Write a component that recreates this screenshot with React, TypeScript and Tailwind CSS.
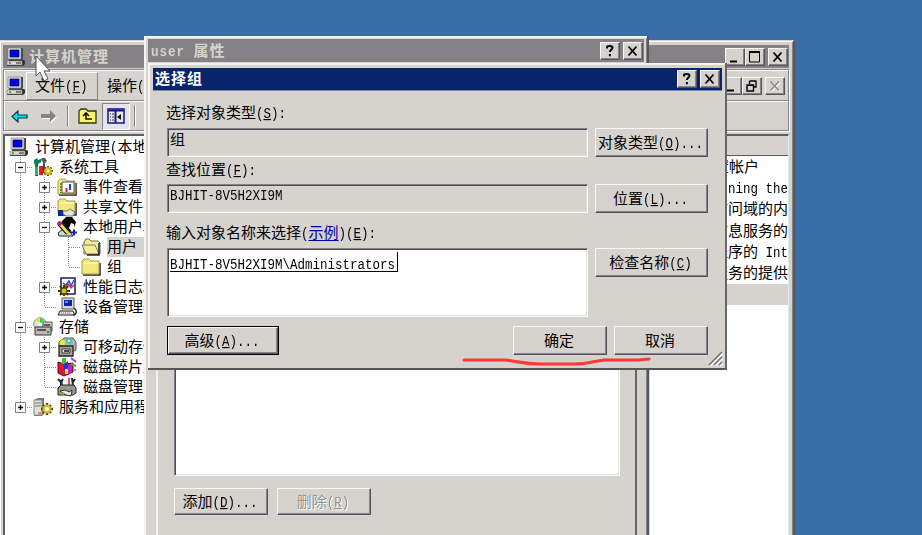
import React from "react";

const raised =
  "border border-t-[#f8f8f5] border-l-[#f8f8f5] border-r-[#55555a] border-b-[#55555a] shadow-[inset_-1px_-1px_0_#84828a]";
const sunken =
  "border border-t-[#84828a] border-l-[#84828a] border-r-[#fbfbf8] border-b-[#fbfbf8] shadow-[inset_1px_1px_0_#4b4b50,inset_-1px_-1px_0_#e3e1dc]";

/* Mixed text: full-width CJK glyphs with half-width Latin; "&" marks the mnemonic. */
function T({ s, className = "" }: { s: string; className?: string }) {
  const parts = s.match(/[\u3400-\u9fff]+|&.|[^\u3400-\u9fff&]+/g) ?? [];
  return (
    <span
      className={`block h-[20px] shrink-0 -translate-x-px -translate-y-px whitespace-pre text-[15px] leading-[20px] font-['Noto_Sans_CJK_SC',sans-serif] ${className}`}
    >
      {parts.map((p, i) =>
        /[\u3400-\u9fff]/.test(p) ? (
          <span key={i}>{p}</span>
        ) : (
          <span
            key={i}
            className={`inline-block origin-[0_80%] scale-y-[1.16] text-[12.5px] leading-none font-['Liberation_Mono',monospace] ${
              p[0] === "&" ? "underline underline-offset-1" : ""
            }`}
          >
            {p.replace("&", "")}
          </span>
        )
      )}
    </span>
  );
}

function Glyph({ kind }: { kind: string }) {
  return (
    <svg width="16" height="14" viewBox="0 0 16 14" fill="none" stroke="#000" strokeWidth="2">
      {kind === "min" && <path d="M3 11.5h7" />}
      {kind === "max" && (
        <>
          <path d="M2.5 2v10h10V2" strokeWidth="1" />
          <path d="M2 2h11" />
        </>
      )}
      {kind === "restore" && (
        <>
          <path d="M5.5 2h7M5.5 2v3M12 2v6h-2" strokeWidth="1.3" />
          <path d="M3 6h6.5v6H3zM3 6.3h6" strokeWidth="1.4" />
        </>
      )}
      {kind === "close" && <path d="M3.500 2.500l8 9M11.500 2.500l-8 9" strokeWidth="1.800" />}
      {kind === "closeOff" && (
        <>
          <path d="M4.5 3.5l8.5 9M13 3.5l-8.5 9" stroke="#fff" strokeWidth="1.5" />
          <path d="M3.5 2.5l8.5 9M12 2.5l-8.5 9" stroke="#8a888a" strokeWidth="1.5" />
        </>
      )}
      {kind === "help" && (
        <path d="M5 4.5V3.2C5 2.3 6 2 7.7 2s2.8.4 2.8 1.8c0 1.7-2.6 1.9-2.6 4.2M7.9 10v2.3" />
      )}
    </svg>
  );
}

function CapBtn({ kind, className = "" }: { kind: string; className?: string }) {
  return (
    <div
      className={`flex h-[18px] w-5 shrink-0 items-center justify-center bg-[#d6d3ce] ${raised} ${className}`}
    >
      <Glyph kind={kind} />
    </div>
  );
}

function Computer() {
  return (
    <svg width="20" height="20" viewBox="0 0 20 20">
      <path d="M3 2l2-1h12v11l-2 2H3z" fill="#444" />
      <path d="M2 1h13v11H2z" fill="#e5e3de" stroke="#777" strokeWidth=".7" />
      <path d="M4 3h9v7H4z" fill="#0000e8" stroke="#001050" strokeWidth=".8" />
      <path d="M1 15l3-2h14l1 1v3l-2 2H1z" fill="#333" />
      <path d="M1 14h15v4H1z" fill="#dedbd5" stroke="#777" strokeWidth=".6" />
      <path d="M3 16h2" stroke="#0a9a35" strokeWidth="1.5" />
      <path d="M10 16h5" stroke="#222" />
    </svg>
  );
}

function FolderBase() {
  return (
    <>
      <path d="M2 18h17V6" stroke="#222" strokeWidth="1.5" fill="none" />
      <path d="M1 17V4l2-2h5l2 2h8v13z" fill="#f0e878" stroke="#a29b52" />
      <path d="M3 6h14" stroke="#fffbd0" />
    </>
  );
}

function Icon({ kind }: { kind: string }) {
  if (kind === "computer") return <Computer />;
  return (
    <svg width="20" height="20" viewBox="0 0 20 20">
      {kind === "tools" && (
        <>
          <path d="M1 6V3l3-2 1 2 3-1v3L5 7v12H2V8z" fill="#087b62" />
          <path d="M2 10h3v8H2z" fill="#18bd65" />
          <path d="M6 9h4v9H6z" fill="#e02020" />
          <path d="M9 1h3l2 3-2 2v5h-2V5L8 3z" fill="#555" />
          <path d="M10 8l3 3v5h-3z" fill="#1830c8" />
          <path d="M15 9v10M10 14h10M11.500 10.500l7 7M18.500 10.500l-7 7" stroke="#6b5800" strokeWidth="2" />
          <circle cx="15" cy="14" r="2.600" fill="#fff" stroke="#d7b51e" strokeWidth="2.4" />
        </>
      )}
      {kind === "event" && (
        <>
          <FolderBase />
          <path d="M5 5h12v11H5z" fill="#fff" stroke="#555" />
          <path d="M4 6v10" stroke="#8b7b00" strokeWidth="2" strokeDasharray="2 1" />
          <path d="M9.500 11v4" stroke="#e02020" strokeWidth="2" />
          <path d="M13 7v6" stroke="#2040e0" strokeWidth="2" />
        </>
      )}
      {kind === "share" && (
        <>
          <FolderBase />
          <path d="M1 13h5v6H1z" fill="#0a2a9a" />
          <path d="M6 14h4l3-2 5 3-2 4H9l-3-2z" fill="#e9e6e0" stroke="#555" strokeWidth=".8" />
        </>
      )}
      {kind === "users" && (
        <>
          <path d="M5 4l4-4h6l4 5-2 7-5 4-6-5z" fill="#080808" />
          <path d="M14 6l3 1 1 4-3 4-3-4z" fill="#f8f5ec" />
          <path d="M1 16l5-4 7 3 3 4H2z" fill="#d8d5ce" stroke="#222" />
          <path d="M2 6l9 10" stroke="#111" strokeWidth="5" />
          <path d="M3 7l8 9" stroke="#efdb4c" strokeWidth="3" />
          <path d="M1 5l3 3" stroke="#c0208c" strokeWidth="3.400" />
          <path d="M14 15.500h6M17 12.500v6" stroke="#1722ba" strokeWidth="2" />
        </>
      )}
      {kind === "folder" && <FolderBase />}
      {kind === "open" && (
        <>
          <path d="M3 17h16V6l-2-2h-7L8 2H5L3 5z" fill="#f7ef8c" stroke="#666" />
          <path d="M1 8h13l4 9H5z" fill="#f5ed91" stroke="#777" />
          <path d="M18 6v12H6" fill="none" stroke="#222" strokeWidth="1.5" />
        </>
      )}
      {kind === "perf" && (
        <>
          <path d="M4 1h14v16H4z" fill="#fff" stroke="#191970" strokeWidth="1.5" />
          <path d="M6 6l3 2 3-4 2 5 3-6" stroke="#2848e8" strokeWidth="1.5" fill="none" />
          <path d="M8 10l3-3 3 4 3-3" stroke="#df2424" strokeWidth="1.3" fill="none" />
          <path d="M7 8v11M1 14h12M3 9l8 9M11 9l-8 9" stroke="#3c3600" strokeWidth="2" />
          <circle cx="7" cy="14" r="3" fill="#d5bd18" stroke="#514800" />
        </>
      )}
      {kind === "device" && (
        <>
          <path d="M5 1h12v11H5z" fill="#ddd9d0" stroke="#555" />
          <path d="M7 3h8v6H7z" fill="#0a20c0" />
          <path d="M8 4h3v2H8z" fill="#499bff" />
          <path d="M3 14h13l2 4H1z" fill="#e6e2db" stroke="#222" />
          <path d="M4 16h9" stroke="#777" strokeDasharray="1 1" />
          <path d="M17 11c4 3 2 7-1 7" fill="none" stroke="#333" strokeWidth="1.5" />
        </>
      )}
      {kind === "storage" && (
        <>
          <circle cx="7" cy="7" r="6.3" fill="#d6e9df" stroke="#888" />
          <path d="M7 7L2 3a6 6 0 0 1 5-2z" fill="#f3e52d" />
          <path d="M7 7V1l4 2z" fill="#24c982" />
          <circle cx="7" cy="7" r="1.5" fill="#fff" />
          <path d="M10 5h9v9h-9z" fill="#d8d5ce" stroke="#555" />
          <path d="M2 10h16v8H2z" fill="#bcb9b3" stroke="#333" />
          <path d="M4 13h9M11 8h6" stroke="#333" strokeWidth="1.4" />
          <path d="M14 15h2" stroke="#159b45" strokeWidth="2" />
        </>
      )}
      {kind === "removable" && (
        <>
          <path d="M2 10V5l5-4h9l3 4v8l-4 2z" fill="#b6b4b0" stroke="#555" />
          <circle cx="5.5" cy="5.5" r="2.7" fill="#ece431" />
          <circle cx="12" cy="4" r="3" fill="#38caaf" />
          <circle cx="12" cy="4" r="1" fill="#fff" />
          <path d="M2 9h14v10H2z" fill="#a6a39d" stroke="#222" strokeWidth="1.3" />
          <path d="M5 12h8v4H5z" fill="#efede9" stroke="#333" />
          <path d="M7 14h5" stroke="#111" strokeWidth="1.5" />
        </>
      )}
      {kind === "defrag" && (
        <>
          <path d="M1 5l6 2 9-1v9l-9 4-6-3z" fill="#db1830" stroke="#650017" />
          <path d="M5 1h4v6H5z" fill="#4bbf22" />
          <path d="M7 7l4-3v7l-4 2z" fill="#1537dc" />
          <path d="M11 8h4v7l-4 3z" fill="#bc20c9" />
          <path d="M8 12h3v5H8z" fill="#efd93a" />
          <path d="M14 1l5 4" stroke="#c530b1" strokeWidth="2" />
          <path d="M14 7l5 2" stroke="#32b54f" strokeWidth="2" />
          <path d="M16 13h3" stroke="#3dbfdc" strokeWidth="2" />
        </>
      )}
      {kind === "disk" && (
        <>
          <path d="M1 2l3 3 2-3M4 5v5M15 1l1 8M18 2l-2 3" stroke="#222" strokeWidth="2" fill="none" />
          <path d="M5 4v6" stroke="#2137cc" strokeWidth="1.500" />
          <path d="M12 1v8" stroke="#c52131" strokeWidth="1.500" />
          <path d="M1 11l3-3h13l2 3v5l-3 2H1z" fill="#999691" stroke="#222" />
          <path d="M3 14l5-1 4 2 3-2-1 6-5-1z" fill="#eeeae0" stroke="#333" />
          <path d="M4 16l3 1" stroke="#bd9d13" strokeWidth="2" />
        </>
      )}
      {kind === "services" && (
        <>
          <path d="M1 3l4-2h6v16l-2 2H1z" fill="#777" />
          <path d="M1 3h8v15H1z" fill="#e2dfd9" stroke="#888" />
          <path d="M2 6h6M2 9h6" stroke="#777" />
          <path d="M5 16h3" stroke="#c62828" />
          <path d="M14 6v12M8 12h12M10 8l8 8M18 8l-8 8" stroke="#4b4100" strokeWidth="2.400" />
          <circle cx="14" cy="12" r="3.3" fill="#fff" stroke="#d3bb20" strokeWidth="2.4" />
        </>
      )}
    </svg>
  );
}

/* One indent cell of the tree. v: vertical, t: tee, l: last branch, +/-: expander, x: expander that ends its line */
function Branch({ c }: { c: string }) {
  const box = c === "+" || c === "-" || c === "x";
  const end = c === "l" || c === "x";
  return (
    <svg className="shrink-0" width="24" height="20" viewBox="0 0 24 20">
      {c !== " " && (
        <path d={end ? "M11.5 0v10" : "M11.5 0v20"} stroke="#8b8b8b" strokeDasharray="1 1" />
      )}
      {c !== " " && c !== "v" && <path d="M12 10.5h12" stroke="#8b8b8b" strokeDasharray="1 1" />}
      {box && (
        <>
          <path d="M6.5 5.5h10v10h-10z" fill="#fff" stroke="#848284" />
          <path d={c === "-" ? "M9 10.5h5" : "M9 10.5h5M11.5 8v5"} stroke="#000" strokeWidth="1.3" />
        </>
      )}
    </svg>
  );
}

const tree: [string, string, string][] = [
  ["", "computer", "计算机管理(本地"],
  ["-", "tools", "系统工具"],
  ["v+", "event", "事件查看器"],
  ["v+", "share", "共享文件夹"],
  ["v-", "users", "本地用户和"],
  ["vvt", "open", "用户"],
  ["vvl", "folder", "组"],
  ["v+", "perf", "性能日志和"],
  ["vl", "device", "设备管理器"],
  ["-", "storage", "存储"],
  ["v+", "removable", "可移动存储"],
  ["vt", "defrag", "磁盘碎片整"],
  ["vl", "disk", "磁盘管理"],
  ["x", "services", "服务和应用程"],
];

function Separator() {
  return <div className="h-[22px] w-[2px] shrink-0 border-l border-l-[#84828a] border-r border-r-white" />;
}

function MainWindow() {
  return (
    <div className="absolute top-[40px] left-0 flex h-[500px] w-[795px] flex-col border-t border-r-2 border-t-[#d6d3ce] border-r-[#55555a] bg-[#d6d3ce] pt-[4px] pr-[4px] pl-[3px] shadow-[inset_1px_1px_0_#fff,inset_-1px_0_0_#84828a]">
      <div className="flex h-[23px] shrink-0 items-center bg-[#848284] pr-[1px] pl-[3px]">
        <Computer />
        <T s="计算机管理" className="ml-[4px] font-bold tracking-[1px] text-[#d6d3ce]" />
        <CapBtn kind="min" className="ml-auto" />
        <CapBtn kind="max" />
        <CapBtn kind="close" className="ml-[3px]" />
      </div>
      <div className="mt-[1px] flex h-[62px] shrink-0 flex-col border border-[#84828a] shadow-[inset_1px_1px_0_#fff,1px_1px_0_#fff]">
        <div className="flex h-[31px] items-center border-b border-b-[#84828a] pt-[2px] pl-[2px] pr-[3px]">
          <Computer />
          <div className="flex h-[28px] w-[72px] items-center border border-t-white border-l-white border-r-[#84828a] border-b-[#84828a] pl-[9px]">
            <T s="文件(&F)" />
          </div>
          <T s="操作(" className="ml-[10px]" />
          <CapBtn kind="min" className="ml-auto" />
          <CapBtn kind="restore" />
          <CapBtn kind="closeOff" className="ml-[3px]" />
        </div>
        <div className="flex h-[30px] items-center border-t border-t-white pl-[7px]">
          <svg width="17" height="13" viewBox="0 0 17 13">
            <path d="M1 6.500L7 1v4h9v3H7v4z" fill="#18dbe8" stroke="#063c55" strokeWidth="1.2" />
          </svg>
          <svg className="ml-[12px]" width="18" height="14" viewBox="0 0 18 14">
            <path d="M17 8.500L11 14v-4H2V7h9V3z" fill="#fff" />
            <path d="M16 7L10 1v4H1v4h9v4z" fill="#848284" />
          </svg>
          <div className="ml-[9px]">
            <Separator />
          </div>
          <svg className="ml-[9px]" width="20" height="18" viewBox="0 0 20 18">
            <path d="M1 16V4l2-2h5l2 2h8v12z" fill="#faf46c" stroke="#35350c" strokeWidth="1.3" />
            <path d="M5 9l3-3 3 3M8 6v6h6" fill="none" stroke="#111" strokeWidth="1.6" />
          </svg>
          <div className="ml-[4px] flex h-[27px] w-[28px] items-center justify-center border border-t-[#84828a] border-l-[#84828a] border-r-white border-b-white bg-[#e5e4e4]">
            <svg width="18" height="16" viewBox="0 0 18 16">
              <path d="M1 1h16v14H1z" fill="#e8e6df" stroke="#15158c" strokeWidth="1.5" />
              <path d="M1 2.500h16M8.500 3v12" stroke="#15158c" strokeWidth="2" />
              <path d="M3 6h4M3 9h4M3 12h4" stroke="#333" strokeDasharray="1 1 3" />
              <path d="M14 6v6l-4-3z" fill="#111" />
            </svg>
          </div>
          <div className="ml-[4px]">
            <Separator />
          </div>
        </div>
      </div>
      <div className="mt-[3px] flex min-h-0 flex-1">
        <div className="w-[200px] shrink-0 border-t-2 border-l-2 border-t-[#606064] border-l-[#606064] bg-white pt-[1px] pl-[4px]">
          {tree.map(([cells, icon, label]) => (
            <div key={label} className="flex h-[20px] items-center">
              {cells.split("").map((c, j) => (
                <Branch key={j} c={c} />
              ))}
              <span className="w-[26px] shrink-0">
                <Icon kind={icon} />
              </span>
              <span
                className={`flex h-[20px] items-center pl-[1px] ${label === "用户" ? "bg-[#d6d3ce] pr-[8px]" : ""}`}
              >
                <T s={label} />
              </span>
            </div>
          ))}
        </div>
        <div className="ml-auto flex w-[139px] flex-col overflow-hidden border-t-2 border-r border-t-[#606064] border-r-[#e8e6e0] bg-white">
          <div className="h-[20px] shrink-0 border-b border-b-[#55555a] bg-[#d6d3ce]" />
          {["置帐户", "running the", "访问域的内", "信息服务的", "程序的 Int", "服务的提供"].map((s, i) => (
            <div
              key={s}
              className={`flex h-[21.330px] shrink-0 items-center justify-end ${i === 0 ? "pr-[29px]" : ""}`}
            >
              <T s={s} className="translate-x-0" />
            </div>
          ))}
          <div className="h-[21px] shrink-0 bg-[#d6d3ce]" />
        </div>
      </div>
    </div>
  );
}

function Button({ s, className, off }: { s: string; className: string; off?: boolean }) {
  return (
    <button
      className={`flex shrink-0 items-center justify-center bg-[#d6d3ce] ${raised} ${className} ${
        off ? "text-[#94928f] [text-shadow:1px_1px_0_#fff]" : ""
      }`}
    >
      <T s={s} />
    </button>
  );
}

function PropertiesWindow() {
  return (
    <div className="absolute top-[36px] left-[144px] flex h-[504px] w-[505px] flex-col border-r-2 border-r-[#55555a] bg-[#d6d3ce] pt-[3px] pr-[3px] pl-[4px] shadow-[inset_2px_2px_0_#f4f3f0,inset_-1px_0_0_#84828a]">
      <div className="flex h-[23px] shrink-0 items-center bg-[#848284] pr-[1px] pl-[4px]">
        <T s="user 属性" className="font-bold tracking-[1px] text-[#d6d3ce]" />
        <CapBtn kind="help" className="ml-auto" />
        <CapBtn kind="close" className="ml-[3px]" />
      </div>
      <div className="mt-[20px] mr-[7px] ml-[8px] flex flex-1 flex-col border-l-2 border-r-2 border-l-[#f4f3f0] border-r-[#66666a] pr-[15px] pl-[16px]">
        <div className={`h-[394px] shrink-0 bg-white ${sunken}`} />
        <div className="mt-[12px] flex gap-[9px]">
          <Button s="添加(&D)..." className="h-[27px] w-[94px]" />
          <Button s="删除(&R)" className="h-[27px] w-[94px]" off />
        </div>
      </div>
    </div>
  );
}

function SelectGroupDialog() {
  return (
    <div className="absolute top-[63px] left-[148px] flex h-[307px] w-[579px] flex-col border-r-2 border-b-2 border-r-[#66666a] border-b-[#55555a] bg-[#d6d3ce] pt-[5px] pr-[3px] pl-[5px] shadow-[inset_2px_2px_0_#f4f3f0]">
      <div className="flex h-[23px] shrink-0 items-center border-b border-b-[#7b86a8] bg-[#08246b] pr-[2px] pl-[3px]">
        <T s="选择组" className="font-bold tracking-[1px] text-white" />
        <CapBtn kind="help" className="ml-auto" />
        <CapBtn kind="close" className="ml-[3px]" />
      </div>
      <div className="flex flex-1 flex-col pt-[12px] pr-[14px] pl-[14px]">
        <T s="选择对象类型(&S):" />
        <div className="mt-[5px] flex justify-between">
          <div className={`h-[29px] w-[421px] pt-[1px] pl-[3px] ${sunken}`}>
            <T s="组" />
          </div>
          <Button s="对象类型(&O)..." className="h-[29px] w-[113px]" />
        </div>
        <T s="查找位置(&F):" className="mt-[3px]" />
        <div className="mt-[4px] flex justify-between">
          <div className={`h-[29px] w-[421px] pl-[3px] ${sunken}`}>
            <T s="BJHIT-8V5H2XI9M" />
          </div>
          <Button s="位置(&L)..." className="h-[29px] w-[113px]" />
        </div>
        <div className="mt-[10px] flex h-[20px]">
          <T s="输入对象名称来选择(" />
          <T s="示例" className="text-[#000098] underline underline-offset-2" />
          <T s=")(&E):" />
        </div>
        <div className="mt-[5px] flex justify-between">
          <div className={`h-[69px] w-[421px] bg-white pt-[3px] pl-[2px] ${sunken}`}>
            <div className="flex h-[20px] w-[228px] items-end border-r border-b border-r-black border-b-black pl-[1px]">
              <T s="BJHIT-8V5H2XI9M\Administrators" className="translate-y-[2px]" />
            </div>
          </div>
          <Button s="检查名称(&C)" className="h-[29px] w-[113px]" />
        </div>
        <div className="mt-[9px] flex">
          <div className="h-[29px] w-[112px] border border-black">
            <Button s="高级(&A)..." className="h-full w-full" />
          </div>
          <Button s="确定" className="ml-auto h-[29px] w-[94px]" />
          <Button s="取消" className="ml-[7px] h-[29px] w-[94px]" />
        </div>
      </div>
      <svg className="absolute right-[2px] bottom-[2px]" width="15" height="15" viewBox="0 0 15 15">
        <path d="M2 15L15 2M7 15l8-8M12 15l3-3" stroke="#fff" strokeWidth="1.500" />
        <path d="M1 14L14 1M6 14l8-8M11 14l3-3" stroke="#77757a" strokeWidth="1.700" />
      </svg>
    </div>
  );
}

export default function App() {
  return (
    <div className="relative h-[535px] w-[922px] overflow-hidden bg-[#396da5] text-black">
      <MainWindow />
      <PropertiesWindow />
      <SelectGroupDialog />
      <svg className="absolute top-[354px] left-[460px]" width="196" height="14" viewBox="0 0 196 14">
        <path
          d="M4 6H45C58 7 62 10 80 10H114C130 10 133 7 144 6H178L189 5"
          fill="none"
          stroke="#ff3838"
          strokeWidth="3.200"
          strokeLinecap="round"
        />
      </svg>
      <svg className="absolute top-[55px] left-[34px]" width="18" height="28" viewBox="0 0 18 28">
        <path d="M2 1v20l4-4 4 9 4-2-4-8h6z" fill="#fff" stroke="#555" strokeWidth="1" />
      </svg>
    </div>
  );
}
